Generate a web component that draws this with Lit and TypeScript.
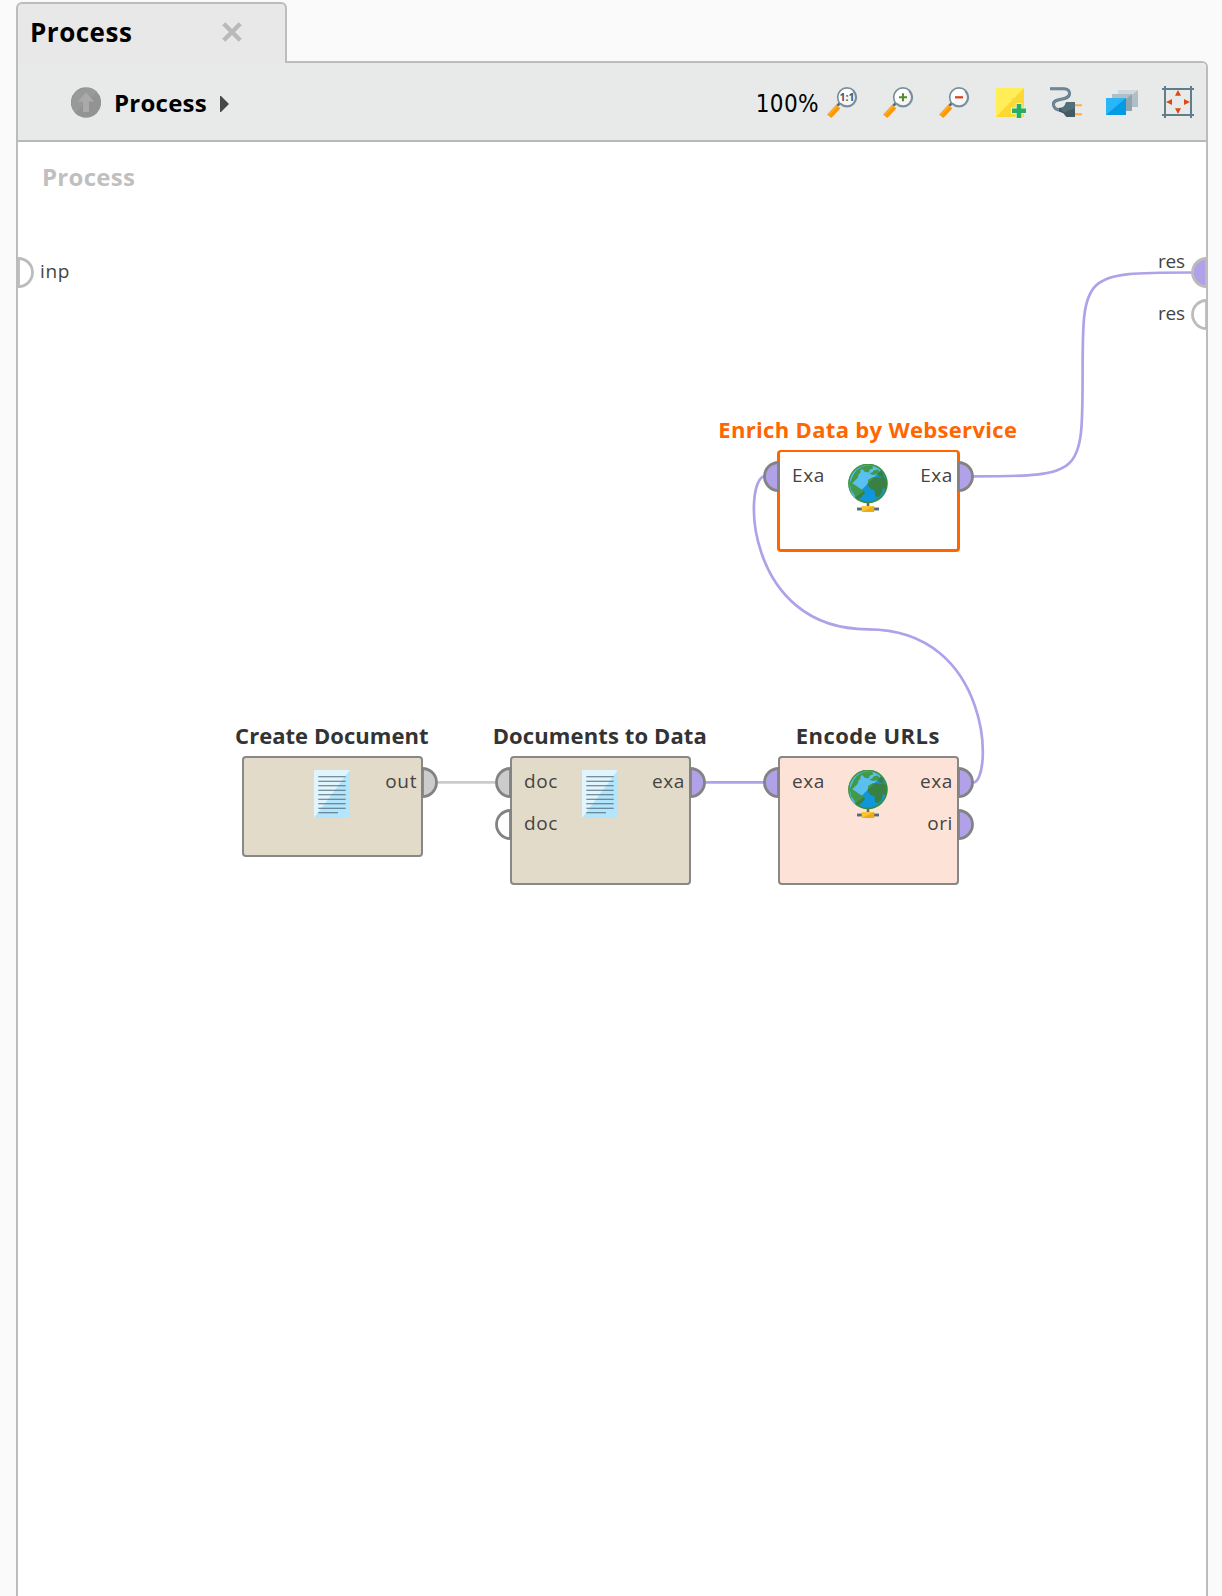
import { LitElement, html, svg, css } from "lit";
import { customElement, property } from "lit/decorators.js";
import { classMap } from "lit/directives/class-map.js";
import { styleMap } from "lit/directives/style-map.js";

type PortKind = "data" | "doc" | "open";
interface Port { label: string; kind: PortKind; }
interface Operator {
  title: string; tracking: number; x: number; y: number; width: number; height: number;
  tone: "sand" | "peach" | "selected"; icon: "document" | "globe";
  inputs: Port[]; outputs: Port[];
}

const FILL: Record<PortKind, string> = { data: "#b1a1e9", doc: "#cccccc", open: "#ffffff" };

const OPERATORS: Operator[] = [
  { title: "Enrich Data by Webservice", tracking: 0.32, x: 777, y: 450, width: 183, height: 102, tone: "selected", icon: "globe",
    inputs: [{ label: "Exa", kind: "data" }], outputs: [{ label: "Exa", kind: "data" }] },
  { title: "Create Document", tracking: 0.04, x: 242, y: 756, width: 181, height: 101, tone: "sand", icon: "document",
    inputs: [], outputs: [{ label: "out", kind: "doc" }] },
  { title: "Documents to Data", tracking: 0.12, x: 510, y: 756, width: 181, height: 129, tone: "sand", icon: "document",
    inputs: [{ label: "doc", kind: "doc" }, { label: "doc", kind: "open" }], outputs: [{ label: "exa", kind: "data" }] },
  { title: "Encode URLs", tracking: 0.48, x: 778, y: 756, width: 181, height: 129, tone: "peach", icon: "globe",
    inputs: [{ label: "exa", kind: "data" }], outputs: [{ label: "exa", kind: "data" }, { label: "ori", kind: "data" }] },
];

const documentIcon = html`<svg width="36" height="48" viewBox="0 0 36 48">
  <path d="M0 0H36V48H0Z" fill="#b3e5fc"/><path d="M0 0H36L0 48Z" fill="#e1f5fe"/>
  <path d="M4.3 6.7H31.7M4.3 11.2H31.7M4.3 15.7H31.7M4.3 20.2H31.7M4.3 24.7H31.7M4.3 29.2H31.7M4.3 33.7H31.7M4.3 38.2H31.7M4.3 42.8H24" stroke="#546e7a" stroke-width="1.1"/>
</svg>`;

const globeIcon = html`<svg width="40" height="48" viewBox="0 0 40 48">
  <path d="M20 38V44" stroke="#546e7a" stroke-width="2.6"/>
  <path d="M9 45H31" stroke="#607d8b" stroke-width="3"/><path d="M9 45H31" stroke="#455a64" stroke-width="1"/>
  <rect x="13.8" y="42" width="12.4" height="6" rx=".6" fill="#f0ab12"/><path d="M14.4 42H26L13.8 48V42.6Z" fill="#fbc531"/>
  <circle cx="20" cy="19.5" r="19.8" fill="#388e3c"/>
  <path d="M6 33.5A19.8 19.8 0 0 1 34 5.5Z" fill="#43994a"/>
  <circle cx="20" cy="19.5" r="18.2" fill="#1296db"/>
  <path d="M7 32.5A18.2 18.2 0 0 1 32.9 6.6Z" fill="#59c0f0"/>
  <path d="M6 9.5A18.6 18.6 0 0 1 24.5 1.4L25 4.5L22 5.5L20.5 8.5L16.5 7.8L14.5 5L12.5 6.2L12.4 9L10.5 10.5L9.8 13.8L4 19.4L2.8 22.4L1.5 19.5Z" fill="#43994a"/>
  <path d="M1.8 19.5L4 19.2L7.5 21.3L10.2 23.2L15.8 26.8L17 29.2L13.6 32.7L10.8 35.2L8.4 34.8L6.7 31.2L3.2 26.2Z" fill="#43994a"/>
  <path d="M15.8 26.8L17 29.2L13.6 32.7L10.8 35.2L8.4 34.8L7.5 33.2Z" fill="#388044"/>
  <path d="M2.1 23.2L3.5 28L7.5 33.8L6.6 34.2A18.2 18.2 0 0 1 2.1 23.2Z" fill="#59c0f0"/>
  <path d="M21.3 9.7L24.2 8.2L25.8 6.2L29.7 5.5L32.3 8.2L34 10.2L31.4 11.2L28.2 10.3L25.2 11.1Z" fill="#43994a"/>
  <path d="M20.3 16L24.3 13.5L29 13.2L33.8 14.1L35.3 12.6L38.2 16.3L38.5 21.5L37.4 25.7L35.4 23.4L33.3 29.8L30.1 33.2L27.1 32.2L26.5 26.5L22.2 24.5L19.6 21.3Z" fill="#388044"/>
  <path d="M20.3 16L24.3 13.5L26 13.4L19.6 19.9Z" fill="#43994a"/>
  <path d="M32.8 6.6L35.2 9.8L34.9 13.4L31.4 12.3L29.8 10.1Z" fill="#388044"/>
</svg>`;

const lens = (mark: unknown) => html`<svg width="32" height="32" viewBox="0 0 32 32">
  <path d="M10.6 20.4L14 17" stroke="#546e7a" stroke-width="2.6"/>
  <path d="M1.2 28.4L10.4 18.8L14.3 22.6L5.4 32Z" fill="#ff9800"/><path d="M1.2 28.4L10.4 18.8L12 20.4L2.8 30Z" fill="#ffa726"/>
  <circle cx="21" cy="11.3" r="9.1" fill="#f5f5f5" stroke="#78909c" stroke-width="2.2"/>
  <path d="M15 17.3A8.4 8.4 0 0 1 27 5.3Z" fill="#fff"/>${mark}</svg>`;

const TOOLS = [
  // 1:1 zoom
  lens(svg`<text class="ratio" x="21" y="15.1" text-anchor="middle">1:1</text>`),
  // zoom in
  lens(svg`<path d="M17 11.3H25M21 7.3V15.3" stroke="#558b2f" stroke-width="2.1"/>`),
  // zoom out
  lens(svg`<path d="M17 11.3H25" stroke="#d6401c" stroke-width="2.2"/>`),
  // add note
  html`<svg width="32" height="32" viewBox="0 0 32 32">
    <path d="M2 2H30V31H2Z" fill="#fdd835"/><path d="M2 2H30L2 31Z" fill="#ffee58"/>
    <path d="M25 17.2V32M17 24.7H32" stroke="#e9f3df" stroke-width="6.6"/>
    <path d="M25 18V32M18 24.8H32" stroke="#27ae60" stroke-width="4.6"/></svg>`,
  // wire cleanup
  html`<svg width="32" height="32" viewBox="0 0 32 32">
    <path d="M0 2.7H14C17.5 2.7 19.5 4.8 19.5 7.5C19.5 15.5 3.4 11 3.4 18.2C3.4 22 7 24 12 24.2" fill="none" stroke="#607d8b" stroke-width="3"/>
    <path d="M0 3H14C17.2 3 19.2 5 19.2 7.6C19.2 15.2 3.7 11.2 3.7 18.2C3.7 22 7 24 12 24" fill="none" stroke="#8299a4" stroke-width=".8"/>
    <path d="M9 21.8H12L14.3 20.3L16.3 16H25V31H16.3L13.6 27.5L9 25.5Z" fill="#455a64"/>
    <path d="M11.5 21.8L14.3 20.3L16.3 16H25V22L14 26.5L11.5 24Z" fill="#546e7a"/>
    <path d="M25 19.3H32M25 28.3H32" stroke="#ffad42" stroke-width="2"/></svg>`,
  // execution order
  html`<svg width="32" height="32" viewBox="0 0 32 32">
    <path d="M12 4H32V21H12Z" fill="#b0bec5"/><path d="M12 4H32L12 21Z" fill="#cfd8dc"/>
    <path d="M6 8H26V25H6Z" fill="#90a4ae"/><path d="M6 8H26L6 25Z" fill="#b0bec5"/>
    <path d="M0 12H20V29H0Z" fill="#039be5"/><path d="M0 12H20L0 29Z" fill="#29b6f6"/></svg>`,
  // fit canvas
  html`<svg width="32" height="32" viewBox="0 0 32 32">
    <path d="M3 0V32M29 0V32M0 3H32M0 29H32" stroke="#607d8b" stroke-width="2"/>
    <path d="M16 4L19 9.8H13ZM16 28L13 22.2H19ZM4 16L10 13V19ZM28 16L22 13V19Z" fill="#dd4814"/></svg>`,
];

/** Half-disc connector; "in" bulges to the left, "out" to the right. */
const disc = (side: "in" | "out", fill: string, stroke: string) => html`<svg width="17" height="31" viewBox="0 0 17 31">
  ${side === "in"
    ? svg`<path d="M15.5 1.5A14 14 0 0 0 15.5 29.5Z" fill=${fill} stroke=${stroke} stroke-width="2.8"/>`
    : svg`<path d="M1.5 1.5A14 14 0 0 1 1.5 29.5Z" fill=${fill} stroke=${stroke} stroke-width="2.8"/>`}</svg>`;

@customElement("operator-node")
export class OperatorNode extends LitElement {
  @property({ attribute: false }) data!: Operator;
  static styles = css`
    :host { display: block; font-family: "Open Sans", "Noto Sans", sans-serif; }
    svg { display: block; }
    .box { position: relative; box-sizing: border-box; width: 100%; height: 100%; border: 2px solid #888; border-radius: 4px;
      display: grid; grid-template-columns: 1fr 40px 1fr; }
    .sand { background: #e3dbc9; }
    .peach { background: #fde3d7; }
    .selected { background: #fff; border: solid #ff6600; border-width: 2px 3px 3px 3px; }
    .title { position: absolute; left: calc(50% - 0.7px); bottom: calc(100% + 11.5px); transform: translateX(-50%); white-space: nowrap;
      font-size: 22px; line-height: 24px; font-weight: 700; color: #333; }
    .selected .title { color: #ff6600; bottom: calc(100% + 11px); }
    .column { display: flex; flex-direction: column; padding-top: 3.5px; }
    .selected .column { padding-top: 4px; }
    .port { height: 38px; padding-bottom: 4px; position: relative; display: flex; align-items: center; font-size: 19px; color: #444;
      line-height: 24px; letter-spacing: 0.6px; }
    .inputs .port { padding-left: 12px; }
    .outputs .port { justify-content: flex-end; padding-right: 4px; }
    .disc { position: absolute; top: 5.2px; }
    .selected .disc { top: 4.8px; }
    .inputs .disc { left: -17px; }
    .outputs .disc { right: -17px; }
    .selected .inputs .disc { left: -17.5px; }
    .icon { display: flex; justify-content: center; align-items: flex-start; padding: 12px 1px 0 0; margin-left: -1px; }
  `;
  private column(side: "in" | "out", ports: Port[]) {
    return html`<div class="column ${side}puts">${ports.map(p => html`<div class="port">
      <span class="disc">${disc(side, FILL[p.kind], "#838383")}</span><span>${p.label}</span></div>`)}</div>`;
  }
  render() {
    const d = this.data;
    return html`<div class=${classMap({ box: true, [d.tone]: true })}>
      <div class="title" style=${styleMap({ letterSpacing: `${d.tracking}px` })}>${d.title}</div>
      ${this.column("in", d.inputs)}
      <div class="icon">${d.icon === "globe" ? globeIcon : documentIcon}</div>
      ${this.column("out", d.outputs)}
    </div>`;
  }
}

@customElement("app-root")
export class AppRoot extends LitElement {
  static styles = css`
    :host { display: flex; flex-direction: column; box-sizing: border-box; height: 1596px; width: 1222px; padding: 2px 14px 0 16px;
      overflow: hidden; background: #fafafa; font-family: "Open Sans", "Noto Sans", sans-serif; }
    svg { display: block; }
    .tab { position: relative; z-index: 1; flex: none; box-sizing: border-box; width: 271px; height: 61px; margin-bottom: -2px; padding: 0 43.5px 3px 12px;
      display: flex; align-items: center; justify-content: space-between; background: #e8e8e8;
      border: 2px solid #bcbcbc; border-bottom: 0; border-radius: 6px 6px 0 0; font-size: 26px; font-weight: 700; letter-spacing: 0.5px; color: #000; }
    .panel { flex: 1; min-height: 0; display: flex; flex-direction: column; border: 2px solid #bcbcbc; border-bottom: 0; border-radius: 0 6px 0 0; background: #fff; }
    .toolbar { flex: none; height: 77px; border-bottom: 2px solid #b8b8b8; background: #e8eae9; border-radius: 0 5px 0 0;
      display: flex; align-items: center; padding: 0 12px 0 53px; }
    .level-up { margin-top: 2px; }
    .crumb { margin: 2px 0 0 13px; font-size: 24px; font-weight: 700; line-height: 30px; letter-spacing: 0.25px; }
    .arrow { margin: 5px 0 0 13.5px; }
    .level { margin: 4px 7px 0 auto; font: 24px/30px "DejaVu Sans Condensed", "DejaVu Sans", sans-serif; font-stretch: condensed; letter-spacing: 0.4px; }
    .tools { display: flex; gap: 24px; }
    .ratio { font: 700 10.5px "Open Sans", sans-serif; fill: #455a64; }
    .canvas { flex: 1; min-height: 0; position: relative; }
    .heading { padding: 19px 0 0 24px; font-size: 24px; line-height: 32px; font-weight: 700; letter-spacing: 0.3px; color: #bfbfbf; }
    .space { position: absolute; left: -18px; top: -142px; width: 1222px; height: 1596px; }
    .space operator-node, .edge, .wires { position: absolute; }
    .wires { left: 0; top: 0; }
    .edge { font-size: 19px; line-height: 24px; letter-spacing: 0.6px; color: #444; }
    .result { letter-spacing: -0.2px; }
    .clip { width: 15px; overflow: hidden; }
  `;
  render() {
    return html`
      <div class="tab"><span>Process</span>
        <svg width="20" height="20" viewBox="0 0 20 20"><path d="M1.8 1.8L18.2 18.2M18.2 1.8L1.8 18.2" stroke="#b9b9b9" stroke-width="4.4"/></svg>
      </div>
      <div class="panel">
        <div class="toolbar">
          <svg class="level-up" width="30" height="31" viewBox="0 0 30 31"><circle cx="15" cy="15.5" r="15.2" fill="#939393"/>
            <path d="M4.3 26A15.2 15.2 0 0 1 26 4.8Z" fill="#999"/><path d="M15 5.5L23 14.5H18V25H12V14.5H7Z" fill="#aaa"/></svg>
          <span class="crumb">Process</span>
          <svg class="arrow" width="9" height="16" viewBox="0 0 9 16"><path d="M0 0H1L9 8L1 16H0Z" fill="#484848"/></svg>
          <span class="level">100%</span>
          <div class="tools">${TOOLS}</div>
        </div>
        <div class="canvas">
          <div class="heading">Process</div>
          <div class="space">
            <svg class="wires" width="1222" height="1596" viewBox="0 0 1222 1596" fill="none" stroke-width="2.7">
              <path d="M437 782.4H496" stroke="#cccccc"/>
              <path d="M705 782.4H764" stroke="#b1a1e9"/>
              <path d="M973 782.5C993 782.5 993 629.3 868 629.3C743 629.3 743 476.3 765 476.3" stroke="#b1a1e9"/>
              <path d="M973 476.3C1082.6 476.3 1082.6 476.3 1082.6 374.4C1082.6 272.5 1082.6 272.5 1192 272.5" stroke="#b1a1e9"/>
            </svg>
            ${OPERATORS.map(o => html`<operator-node .data=${o}
              style=${styleMap({ left: `${o.x}px`, top: `${o.y}px`, width: `${o.width}px`, height: `${o.height}px` })}></operator-node>`)}
            ${this.port("out", "open", 16.8, 272.5)}
            ${this.port("in", "data", 1191, 272.5)}
            ${this.port("in", "open", 1191, 314.5)}
            ${this.label("inp", 40, 258.5, false)}
            ${this.label("res", 1158, 248.5, true)}
            ${this.label("res", 1158, 300.5, true)}
          </div>
        </div>
      </div>`;
  }
  private port(side: "in" | "out", kind: PortKind, x: number, y: number) {
    return html`<div class=${classMap({ edge: true, clip: side === "in" })}
      style=${styleMap({ left: `${x}px`, top: `${y - 15.5}px` })}>${disc(side, FILL[kind], "#bcbcbc")}</div>`;
  }
  private label(text: string, x: number, y: number, result: boolean) {
    return html`<div class=${classMap({ edge: true, result })} style=${styleMap({ left: `${x}px`, top: `${y}px` })}>${text}</div>`;
  }
}
